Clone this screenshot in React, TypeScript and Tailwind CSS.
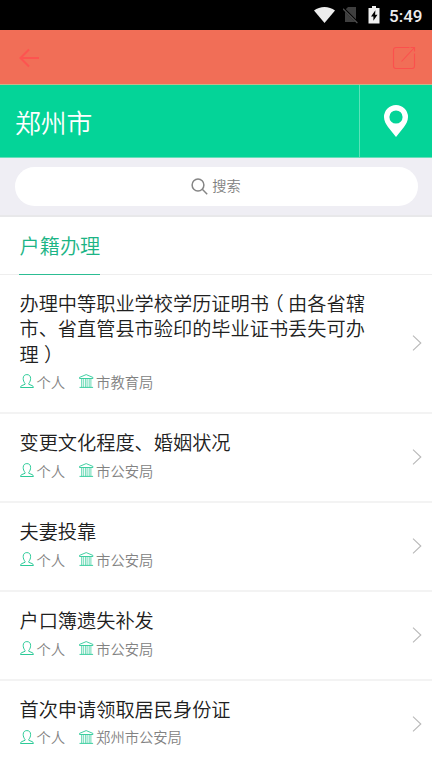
import { Fragment } from "react";

const services = [
  {
    lines: ["办理中等职业学校学历证明书（由各省辖", "市、省直管县市验印的毕业证书丢失可办", "理）"],
    target: "个人",
    office: "市教育局",
  },
  { lines: ["变更文化程度、婚姻状况"], target: "个人", office: "市公安局" },
  { lines: ["夫妻投靠"], target: "个人", office: "市公安局" },
  { lines: ["户口簿遗失补发"], target: "个人", office: "市公安局" },
  { lines: ["首次申请领取居民身份证"], target: "个人", office: "郑州市公安局" },
];

// half-width bracket glyphs, padded so they sit in the middle of a full cell
const TitleLine = ({ text }: { text: string }) => (
  <span className="block whitespace-nowrap">
    {text.split(/([（）])/).map((part, i) =>
      part === "（" || part === "）" ? (
        <span key={i} className="pl-[5.2px] pr-[4.4px] [font-feature-settings:'halt']">{part}</span>
      ) : (
        <Fragment key={i}>{part}</Fragment>
      )
    )}
  </span>
);

const PersonIcon = () => (
  <svg className="h-[15px] w-[15px] shrink-0" viewBox="0 0 15 15" fill="none" stroke="#2ccb98" strokeWidth="1">
    <path d="M5 9.3C3.9 8.2 3.2 6.3 3.2 4.4C3.2 2 4.6.6 6.9.6s3.7 1.4 3.7 3.8c0 1.9-.7 3.8-1.8 4.9v1l3.3 1.3c.8.3 1.3.9 1.3 1.9H.5c0-1 .5-1.6 1.3-1.9L5 10.3z" />
  </svg>
);

const OfficeIcon = () => (
  <svg className="h-[15px] w-[15px] shrink-0" viewBox="0 0 15 15" fill="none" stroke="#2ccb98">
    <path d="M.5 4.5V3.4L7.2.6l6.7 2.8v1.1zM.5 13.4h13.6" strokeWidth=".9" />
    <path d="M2.6 4.5v8.9M4.3 4.5v8.9M6.4 4.5v8.9M8.1 4.5v8.9M10.2 4.5v8.9M11.9 4.5v8.9" strokeWidth=".7" />
  </svg>
);

const StatusBar = () => (
  <div className="flex h-[30px] items-center bg-black pl-[314px]">
    <svg className="h-[18px] w-[21px]" viewBox="0 0 21 18">
      <path d="M0 4.6C5.8-.1 15.2-.1 21 4.6L10.5 17z" fill="#ededed" />
    </svg>
    <svg className="ml-2 h-[18px] w-4" viewBox="0 0 16 18">
      <path d="M5 1h8v15H2V4z" fill="#3f3f3f" />
      <path d="M.5 2.5L15 17" stroke="#000" strokeWidth="2.4" />
      <path d="M0 2.8L14.4 17" stroke="#505050" strokeWidth="1.2" />
    </svg>
    <svg className="ml-[9px] h-[18px] w-3" viewBox="0 0 12 18">
      <path d="M4 0h4v2h3.5v15.5H.5V2H4z" fill="#f0f0f0" />
      <path d="M7.4 4.3L3 10.5h2.4v4.2L9.5 8.8H7.1z" fill="#000" />
    </svg>
    <span className="ml-[9px] mt-[2px] font-['Roboto',sans-serif] text-[17px] font-medium leading-none text-[#ededed]">5:49</span>
  </div>
);

const App = () => {
  return (
    <div className="h-[768px] w-[432px] overflow-hidden bg-white font-['Noto_Sans_CJK_SC',sans-serif] font-[350]">
      <StatusBar />

      <div className="flex h-[55px] items-center justify-between border-b border-[#c4b58a] bg-[#f16e57] pl-[19px] pr-[16px] pt-px">
        <svg className="h-5 w-5" viewBox="0 0 20 20" fill="none" stroke="#fd5450" strokeWidth="2">
          <path d="M20 10H1.5M10 1.5L1.5 10l8.5 8.5" />
        </svg>
        <svg className="h-6 w-6" viewBox="0 0 24 24" fill="none" stroke="#fb504d" strokeWidth="1.1">
          <path d="M17.5 1.5H4A2.5 2.5 0 0 0 1.5 4v16A2.5 2.5 0 0 0 4 22.5h16a2.5 2.5 0 0 0 2.5-2.5V7.5M9.5 15.5l13-14M18.5 1.5h4v4" />
        </svg>
      </div>

      <div className="flex h-[73px] border-b border-[#68dfba] bg-[#04d498] text-white">
        <div className="flex flex-1 items-center pl-[15px] pt-px text-[25.8px] leading-none">郑州市</div>
        <div className="flex w-[73px] items-center justify-center border-l border-[#5be3b9]">
          <svg className="h-8 w-6" viewBox="0 0 24 32">
            <path d="M12 0a12 12 0 0 0-12 12c0 4 2 7 4 10l8 10 8-10c2-3 4-6 4-10A12 12 0 0 0 12 0zm0 5.4a6.6 6.6 0 1 1 0 13.2 6.6 6.6 0 0 1 0-13.2z" fill="#fff" fillRule="evenodd" />
          </svg>
        </div>
      </div>

      <div className="h-[59px] border-b-2 border-[#e8e8ea] bg-[#efeef4] px-[14.5px] pt-[9px]">
        <div className="flex h-[39px] items-center justify-center rounded-full bg-white text-[14.2px] leading-none text-[#808080]">
          <svg className="mr-1 h-[17px] w-[17px]" viewBox="0 0 17 17" fill="none" stroke="#858585" strokeWidth="1.5">
            <circle cx="7" cy="7" r="5.9" />
            <path d="M11.3 11.3l4.9 4.9" />
          </svg>
          <span className="-mt-[2px]">搜索</span>
        </div>
      </div>

      <div className="flex h-[58px] border-b border-[#eeeeee] pl-[19px]">
        <h2 className="h-[58px] border-b border-[#2cbd93] pl-[0.5px] pt-[14px] text-[20.2px] leading-[29px] text-[#1cb485]">户籍办理</h2>
      </div>

      <ul>
        {services.map((service) => (
          <li key={service.lines[0]} className="flex items-center justify-between border-b-2 border-[#f3f3f3] pb-[20.6px] pl-[19.5px] pr-[10px] pt-4">
            <div>
              <h3 className="text-[19.2px] leading-[25.3px] text-[#202020]">
                {service.lines.map((line) => (
                  <TitleLine key={line} text={line} />
                ))}
              </h3>
              <div className="mt-[5px] flex h-5 items-center text-[14.3px] leading-5 text-[#828282]">
                <PersonIcon />
                <span className="ml-[2px]">{service.target}</span>
                <span className="w-[14px]" />
                <OfficeIcon />
                <span className="ml-[2px]">{service.office}</span>
              </div>
            </div>
            <svg className="mt-[3px] h-4 w-[10px]" viewBox="0 0 10 16" fill="none" stroke="#b9b9b9" strokeWidth="1.1">
              <path d="M1 .7L8.8 8 1 15.3" />
            </svg>
          </li>
        ))}
      </ul>
    </div>
  );
};

export default App;
